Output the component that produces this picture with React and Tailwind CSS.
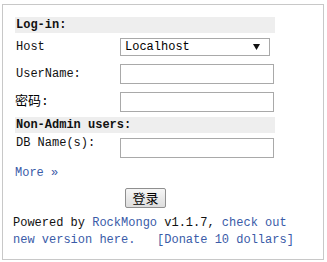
import React from "react";

const mono = { fontFamily: '"Liberation Mono", "Courier New", monospace' };
const cjk = '"Liberation Mono", "Noto Sans CJK SC", monospace';

export default function App() {
  return (
    <div className="w-[327px] h-[262px] bg-white overflow-hidden" style={mono}>
      <div className="ml-[2px] mt-[4px] w-[322px] h-[256px] border border-[#c8c8c8] pl-[12px] pt-[12px] text-[12px] text-[#111]">
        <div className="w-[260px] h-[16px] bg-[#eeeeee] pl-[1px] font-bold leading-[16px]">Log-in:</div>

        <div className="flex h-[27px] pt-[5px]">
          <div className="w-[105px] pl-[1px] leading-[18px]">Host</div>
          <div className="w-[150px] h-[18px] border border-[#a9a9a9] bg-white flex items-center justify-between pl-[4px] pr-[9px] text-black leading-[16px]">
            <span>Localhost</span>
            <svg width="7" height="6" viewBox="0 0 7 6">
              <path d="M0 0 L7 0 L3.5 6 Z" fill="#111" />
            </svg>
          </div>
        </div>

        <div className="flex items-center pt-[4px]">
          <div className="w-[105px] pl-[1px] leading-[16px]">UserName:</div>
          <div className="w-[154px] h-[20px] border border-[#a9a9a9] bg-white" />
        </div>

        <div className="flex items-center pt-[8px]">
          <div className="w-[105px] leading-[16px] text-[13px] text-black" style={{ fontFamily: cjk }}>
            密码:
          </div>
          <div className="w-[154px] h-[20px] border border-[#a9a9a9] bg-white" />
        </div>

        <div className="mt-[5px] w-[260px] h-[16px] bg-[#eeeeee] pl-[1px] font-bold leading-[16px]">Non-Admin users:</div>

        <div className="flex items-start pt-[5px]">
          <div className="w-[105px] pl-[1px] leading-[16px] -mt-[3px]">DB Name(s):</div>
          <div className="w-[154px] h-[20px] border border-[#a9a9a9] bg-white" />
        </div>

        <div className="mt-[7px] leading-[16px] text-[#3a5ba8]">More »</div>

        <div className="mt-[7px] ml-[110px] w-[41px] h-[20px] border border-[#8f8f8f] rounded-[2px] bg-gradient-to-b from-[#f6f6f6] to-[#dddddd] flex items-center justify-center text-[13px] text-black" style={{ fontFamily: '"Noto Sans CJK SC", sans-serif' }}>
          登录
        </div>

        <div className="mt-[7px] -ml-[2px] leading-[17px] whitespace-pre text-[#111]">
          Powered by <span className="text-[#3a5ba8]">RockMongo</span> v1.1.7, <span className="text-[#3a5ba8]">check out</span>
          <br />
          <span className="text-[#3a5ba8]">new version here.</span>{"   "}
          <span className="text-[#3a5ba8]">[Donate 10 dollars]</span>
        </div>
      </div>
    </div>
  );
}
